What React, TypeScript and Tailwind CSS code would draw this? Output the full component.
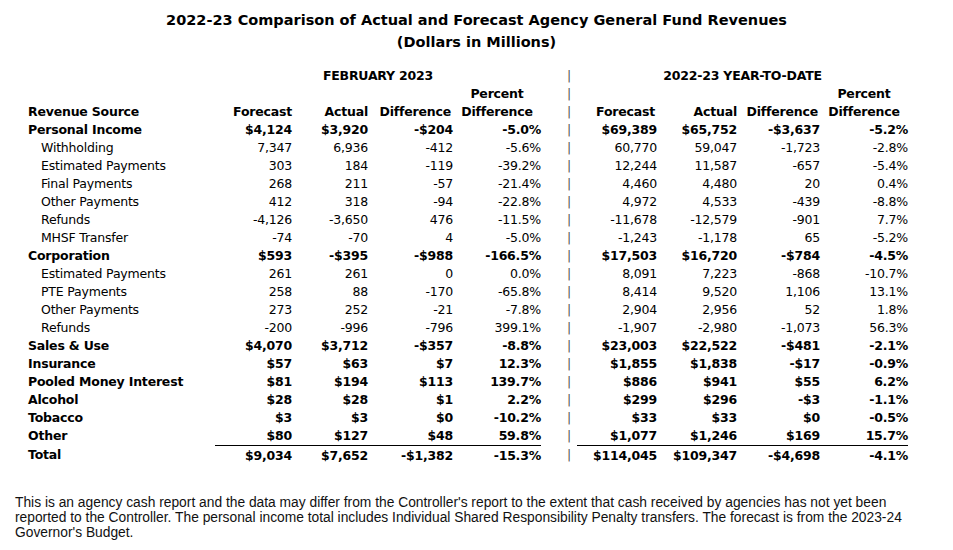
type Row = {
  label: string;
  bold?: boolean;
  values: string[];
  total?: boolean;
};

const rows: Row[] = [
  { label: 'Personal Income', bold: true, values: ['$4,124', '$3,920', '-$204', '-5.0%', '$69,389', '$65,752', '-$3,637', '-5.2%'] },
  { label: 'Withholding', values: ['7,347', '6,936', '-412', '-5.6%', '60,770', '59,047', '-1,723', '-2.8%'] },
  { label: 'Estimated Payments', values: ['303', '184', '-119', '-39.2%', '12,244', '11,587', '-657', '-5.4%'] },
  { label: 'Final Payments', values: ['268', '211', '-57', '-21.4%', '4,460', '4,480', '20', '0.4%'] },
  { label: 'Other Payments', values: ['412', '318', '-94', '-22.8%', '4,972', '4,533', '-439', '-8.8%'] },
  { label: 'Refunds', values: ['-4,126', '-3,650', '476', '-11.5%', '-11,678', '-12,579', '-901', '7.7%'] },
  { label: 'MHSF Transfer', values: ['-74', '-70', '4', '-5.0%', '-1,243', '-1,178', '65', '-5.2%'] },
  { label: 'Corporation', bold: true, values: ['$593', '-$395', '-$988', '-166.5%', '$17,503', '$16,720', '-$784', '-4.5%'] },
  { label: 'Estimated Payments', values: ['261', '261', '0', '0.0%', '8,091', '7,223', '-868', '-10.7%'] },
  { label: 'PTE Payments', values: ['258', '88', '-170', '-65.8%', '8,414', '9,520', '1,106', '13.1%'] },
  { label: 'Other Payments', values: ['273', '252', '-21', '-7.8%', '2,904', '2,956', '52', '1.8%'] },
  { label: 'Refunds', values: ['-200', '-996', '-796', '399.1%', '-1,907', '-2,980', '-1,073', '56.3%'] },
  { label: 'Sales & Use', bold: true, values: ['$4,070', '$3,712', '-$357', '-8.8%', '$23,003', '$22,522', '-$481', '-2.1%'] },
  { label: 'Insurance', bold: true, values: ['$57', '$63', '$7', '12.3%', '$1,855', '$1,838', '-$17', '-0.9%'] },
  { label: 'Pooled Money Interest', bold: true, values: ['$81', '$194', '$113', '139.7%', '$886', '$941', '$55', '6.2%'] },
  { label: 'Alcohol', bold: true, values: ['$28', '$28', '$1', '2.2%', '$299', '$296', '-$3', '-1.1%'] },
  { label: 'Tobacco', bold: true, values: ['$3', '$3', '$0', '-10.2%', '$33', '$33', '$0', '-0.5%'] },
  { label: 'Other', bold: true, values: ['$80', '$127', '$48', '59.8%', '$1,077', '$1,246', '$169', '15.7%'] },
  { label: 'Total', bold: true, total: true, values: ['$9,034', '$7,652', '-$1,382', '-15.3%', '$114,045', '$109,347', '-$4,698', '-4.1%'] },
];

const widths = ['w-[187px]', 'w-[77px]', 'w-[76px]', 'w-[85px]', 'w-[88px]', 'w-[36px]', 'w-[80px]', 'w-[80px]', 'w-[83px]', 'w-[88px]'];

function Pipe() {
  return <td className="text-right pr-[6px] text-[#555] font-normal">|</td>;
}

export default function App() {
  return (
    <div className="w-[953px] h-[550px] bg-white text-black overflow-hidden" style={{ fontFamily: '"DejaVu Sans", Verdana, sans-serif' }}>
      <div className="pt-[9px] text-center font-bold text-[14.5px] leading-[22px]">
        <div>2022-23 Comparison of Actual and Forecast Agency General Fund Revenues</div>
        <div>(Dollars in Millions)</div>
      </div>

      <table className="ml-[28px] mt-[14px] border-collapse table-fixed text-[12.5px] leading-[18px] tracking-[-0.2px]">
        <colgroup>
          {widths.map((w, i) => (
            <col key={i} className={w} />
          ))}
        </colgroup>
        <thead className="font-bold">
          <tr>
            <td />
            <td colSpan={4} className="text-center">FEBRUARY 2023</td>
            <Pipe />
            <td colSpan={4} className="text-center">2022-23 YEAR-TO-DATE</td>
          </tr>
          <tr>
            <td colSpan={4} />
            <td className="text-center">Percent</td>
            <Pipe />
            <td colSpan={3} />
            <td className="text-center">Percent</td>
          </tr>
          <tr>
            <td className="text-left">Revenue Source</td>
            <td className="text-right">Forecast</td>
            <td className="text-right">Actual</td>
            <td className="text-right pr-[2px]">Difference</td>
            <td className="text-center">Difference</td>
            <Pipe />
            <td className="text-right pr-[2px]">Forecast</td>
            <td className="text-right">Actual</td>
            <td className="text-right pr-[2px]">Difference</td>
            <td className="text-center">Difference</td>
          </tr>
        </thead>
        <tbody>
          {rows.map((r, i) => (
            <tr key={i} className={r.bold ? 'font-bold' : 'font-normal'}>
              <td className={r.bold ? 'text-left whitespace-nowrap' : 'text-left whitespace-nowrap pl-[13px]'}>{r.label}</td>
              {r.values.slice(0, 4).map((v, j) => (
                <td key={j} className={r.total ? 'text-right border-t border-black pt-[1px]' : 'text-right'}>{v}</td>
              ))}
              <Pipe />
              {r.values.slice(4).map((v, j) => (
                <td key={j} className={r.total ? 'text-right border-t border-black pt-[1px]' : 'text-right'}>{v}</td>
              ))}
            </tr>
          ))}
        </tbody>
      </table>

      <p className="mt-[30px] ml-[15px] w-[895px] text-[13.8px] leading-[15px] text-[#111]" style={{ fontFamily: '"Liberation Sans", Arial, sans-serif' }}>
        This is an agency cash report and the data may differ from the Controller's report to the extent that cash received by agencies has not yet been reported to the Controller. The personal income total includes Individual Shared Responsibility Penalty transfers. The forecast is from the 2023-24 Governor's Budget.
      </p>
    </div>
  );
}
